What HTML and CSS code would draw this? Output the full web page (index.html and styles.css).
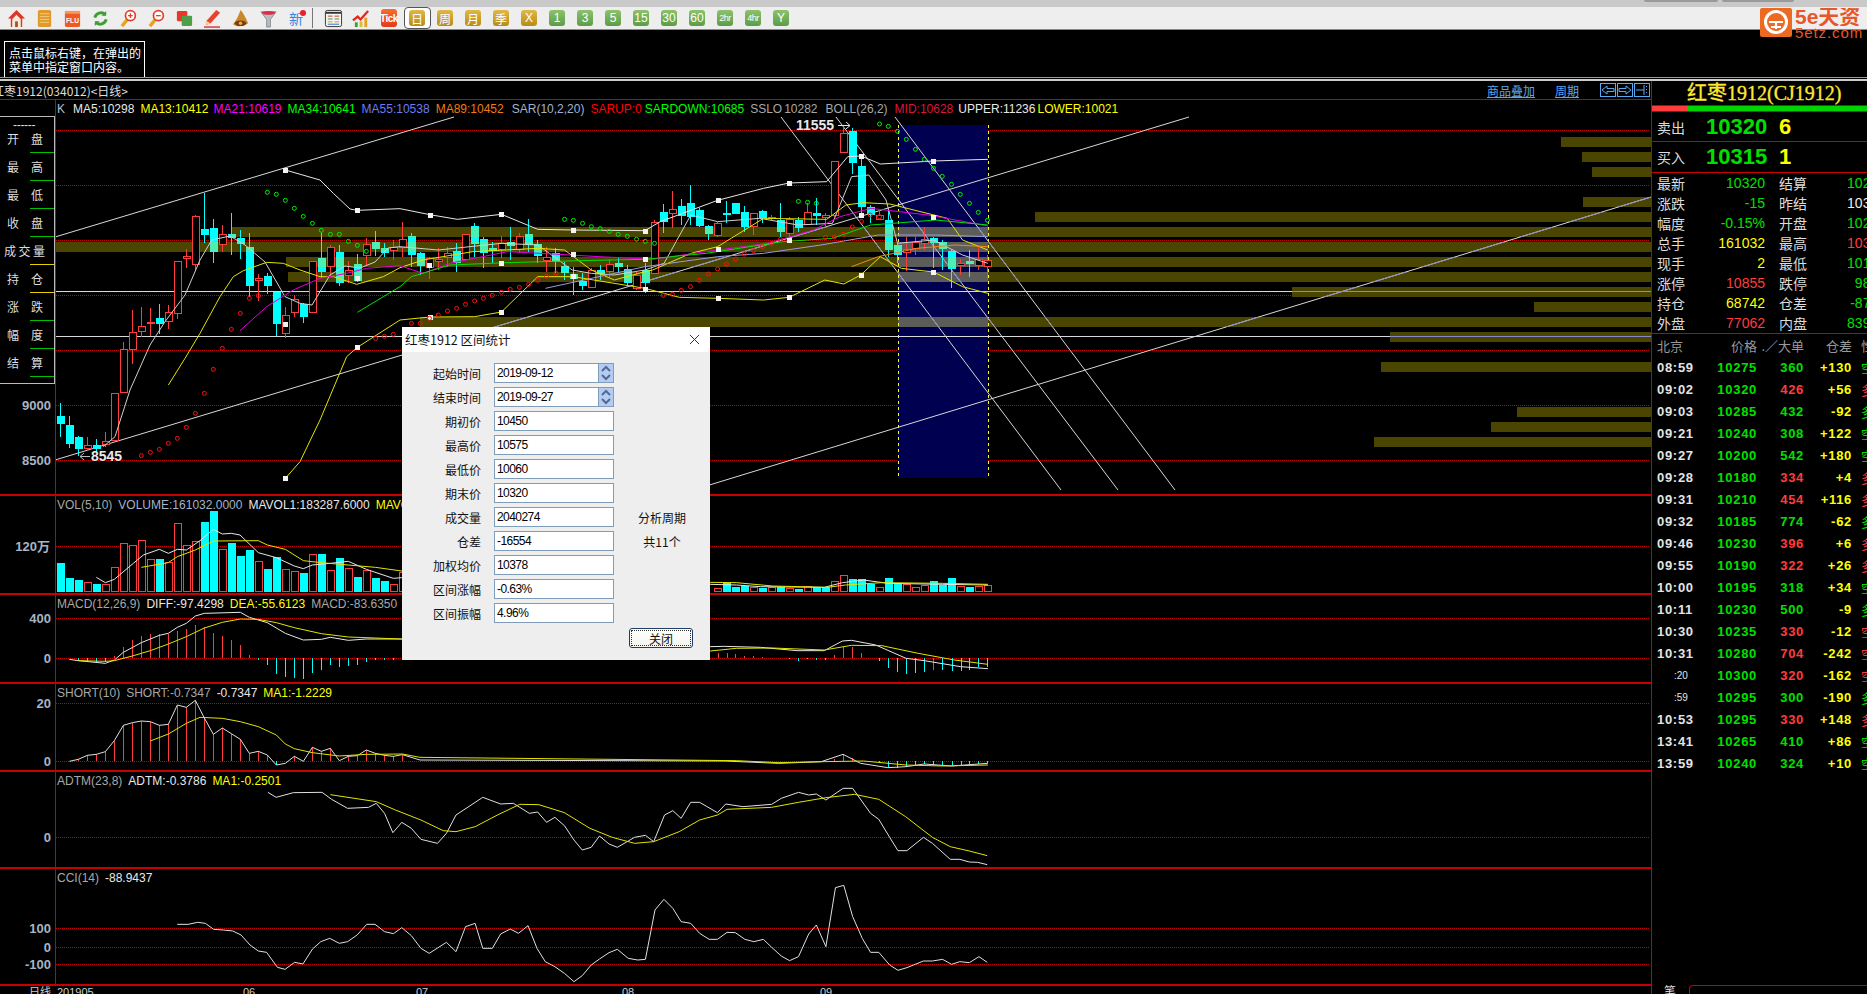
FILE: index.html
```html
<!DOCTYPE html>
<html lang="zh">
<head>
<meta charset="utf-8">
<title>红枣1912</title>
<link rel="stylesheet" href="styles.css">
</head>
<body>
<div class="strip">
  <span class="frag">系统 功能</span><span class="frag">报价 分析</span><span class="frag red">交易 委托</span><span class="frag">扩展 工具</span><span class="frag">帮助</span><span class="frag red far">风险提示 公告</span>
  <span class="stab"></span><span class="stab"></span>
</div>
<div class="toolbar">
  <span class="tool"><svg viewBox="0 0 20 20"><path d="M10 1L1 10h3v9h12v-9h3z" fill="#d9382a"/><path d="M5.500 10.500L10 6l4.500 4.500V19h-9z" fill="#f6ead8"/><path d="M8.500 13h3v6h-3z" fill="#a9502a"/></svg></span>
  <span class="tool"><svg viewBox="0 0 20 20"><rect x="3" y="1" width="14" height="18" rx="2" fill="#e09a2c"/><path d="M5 5h10M5 8h10M5 11h10M5 14h10" stroke="#f4cf7a"/></svg></span>
  <span class="tool"><svg viewBox="0 0 20 20"><rect x="2" y="2" width="16" height="17" rx="2" fill="#ee5a26"/><rect x="2" y="2" width="16" height="3" fill="#f59a5a"/><text x="10" y="15" class="ico-t">FLU</text></svg></span>
  <span class="tool"><svg viewBox="0 0 20 20" fill="none" stroke="#3f9e32" stroke-width="3"><path d="M4 9a6.500 6.500 0 0 1 11-3"/><path d="M16 11a6.500 6.500 0 0 1-11 3"/><path d="M16 2v5h-5z" fill="#3f9e32" stroke="none"/><path d="M4 18v-5h5z" fill="#3f9e32" stroke="none"/></svg></span>
  <span class="tool"><svg viewBox="0 0 20 20"><path d="M9 11L3 18" stroke="#eaa21c" stroke-width="3.500"/><circle cx="12" cy="7" r="5.200" fill="#fff" stroke="#e0402a" stroke-width="1.800"/><path d="M9.500 7h5M12 4.500v5" stroke="#e0402a" stroke-width="1.400"/></svg></span>
  <span class="tool"><svg viewBox="0 0 20 20"><path d="M9 11L3 18" stroke="#eaa21c" stroke-width="3.500"/><circle cx="12" cy="7" r="5.200" fill="#fff" stroke="#e0402a" stroke-width="1.800"/><path d="M9.500 7h5" stroke="#e0402a" stroke-width="1.400"/></svg></span>
  <span class="tool"><svg viewBox="0 0 20 20"><rect x="2" y="2" width="11" height="11" rx="1.500" fill="#e8382a"/><rect x="7" y="7" width="11" height="11" rx="1.500" fill="#4f9f4a"/></svg></span>
  <span class="tool"><svg viewBox="0 0 20 20"><path d="M14 1l4 3L8 15l-5 2 1-5z" fill="#e8432e"/><path d="M3 12l5 3-5 2z" fill="#f5c9a0"/><path d="M1 19h17" stroke="#d33" stroke-width="1.500"/></svg></span>
  <span class="tool"><svg viewBox="0 0 20 20"><path d="M10 1c3 3 6 9 8 14-5 4-12 4-16 1 3-3 6-9 8-15z" fill="#c9892a"/><ellipse cx="10" cy="15" rx="6" ry="3" fill="#7a3a12"/><circle cx="10" cy="15" r="1.800" fill="#e8b040"/></svg></span>
  <span class="tool"><svg viewBox="0 0 20 20"><path d="M2 3h16l-6 8v8h-4v-8z" fill="#b9bcc0" stroke="#7a7d80" stroke-width=".8"/><ellipse cx="10" cy="4" rx="7" ry="2" fill="#d8304a"/></svg></span>
  <span class="tool new">新<i></i></span>
  <span class="sep"></span>
  <span class="tool"><svg viewBox="0 0 20 20"><rect x="1.500" y="1.500" width="17" height="17" rx="2" fill="#f5f5f0" stroke="#333"/><path d="M2 4h16" stroke="#333" stroke-width="2"/><path d="M4 7.500h5M11 7.500h5" stroke="#c33"/><path d="M4 10.500h5M11 10.500h5" stroke="#393"/><path d="M4 13.500h5M11 13.500h5" stroke="#c93"/><path d="M4 16h12" stroke="#36c"/></svg></span>
  <span class="tool"><svg viewBox="0 0 20 20"><path d="M1 12l5-4 3 3 8-9" fill="none" stroke="#e0281e" stroke-width="2.400"/><rect x="3" y="14" width="3" height="5" fill="#3fa03a"/><rect x="8" y="13" width="3" height="6" fill="#d8c22a"/><rect x="13" y="9" width="3" height="10" fill="#e8a020"/></svg></span>
  <span class="tool tick">Tick</span>
  <span class="tool"><span class="chosen"><b class="pill gold">日</b></span></span>
  <span class="tool"><b class="pill gold">周</b></span>
  <span class="tool"><b class="pill gold">月</b></span>
  <span class="tool"><b class="pill gold">季</b></span>
  <span class="tool"><b class="pill gold">X</b></span>
  <span class="tool"><b class="pill green">1</b></span>
  <span class="tool"><b class="pill green">3</b></span>
  <span class="tool"><b class="pill green">5</b></span>
  <span class="tool"><b class="pill green">15</b></span>
  <span class="tool"><b class="pill green">30</b></span>
  <span class="tool"><b class="pill green">60</b></span>
  <span class="tool"><b class="pill green small">2hr</b></span>
  <span class="tool"><b class="pill green small">4hr</b></span>
  <span class="tool"><b class="pill green">Y</b></span>
  <div class="logo">
    <svg viewBox="0 0 32 29"><rect width="32" height="29" rx="2" fill="#ec6a22"/><circle cx="16" cy="14" r="10.500" fill="none" stroke="#fff" stroke-width="3"/><path d="M9 14h14M16 14v7M11 19h10" stroke="#fff" stroke-width="2.200"/></svg>
    <div class="logo-words"><span class="logo-big">5e天资</span><span class="logo-small">5etz.com</span></div>
  </div>
</div>
<div class="infobar">
  <div class="hint">点击鼠标右键，在弹出的<br>菜单中指定窗口内容。</div>
</div>
<div class="divider"></div>
<div class="workspace">
  <section class="chart">
    <svg id="plot" class="plot" viewBox="0 81 1652 913"></svg>
    <div class="chart-title">
      <span class="name">红枣1912(034012)&lt;日线&gt;</span>
      <a class="link first">商品叠加</a><a class="link">周期</a>
      <span class="arrows">
        <i class="arrow"><svg viewBox="0 0 14 12"><path d="M1 6l5-4v2.500h7v3H6V10z" fill="none" stroke="#5aa8f0"/></svg></i>
        <i class="arrow"><svg viewBox="0 0 14 12"><path d="M13 6L8 2v2.500H1v3h7V10z" fill="none" stroke="#5aa8f0"/></svg></i>
        <i class="arrow"><svg viewBox="0 0 14 12"><path d="M1 6h8M9 1v10M11.500 2v1M11.500 5v1M11.500 8v1" fill="none" stroke="#5aa8f0"/></svg></i>
      </span>
    </div>
    <div class="pane main">
      <div class="axis">
        <div class="scale">
          <div class="scale-head">------</div>
          <div class="s-row"><span>开</span><span>盘</span></div>
          <div class="s-row"><span>最</span><span>高</span></div>
          <div class="s-row"><span>最</span><span>低</span></div>
          <div class="s-row"><span>收</span><span>盘</span></div>
          <div class="s-row yel wide"><span>成</span><span>交</span><span>量</span></div>
          <div class="s-row yel"><span>持</span><span>仓</span></div>
          <div class="s-row"><span>涨</span><span>跌</span></div>
          <div class="s-row"><span>幅</span><span>度</span></div>
          <div class="s-row"><span>结</span><span>算</span></div>
        </div>
      </div>
      <div class="legend tight">
        <span class="lk">K</span><span class="l-w">MA5:10298</span><span class="l-y g6">MA13:10412</span><span class="l-m g5">MA21:10619</span><span class="l-g g6">MA34:10641</span><span class="l-b g6">MA55:10538</span><span class="l-o g6">MA89:10452</span><span class="l-s g8">SAR(10,2,20)</span><span class="l-r g6">SARUP:0</span><span class="l-g g3">SARDOWN:10685</span><span class="l-a g6">SSLO</span><span class="l-a g2">10282</span><span class="l-a g8">BOLL(26,2)</span><span class="l-c g7">MID:10628</span><span class="l-w g5">UPPER:11236</span><span class="l-y g2">LOWER:10021</span>
      </div>
    </div>
    <div class="pane vol">
      <div class="axis"></div>
      <div class="legend"><span class="l-a">VOL(5,10)</span><span class="l-s">VOLUME:161032.0000</span><span class="l-w">MAVOL1:183287.6000</span><span class="l-y">MAVOL2:196512.4000</span></div>
    </div>
    <div class="pane macd">
      <div class="axis"></div>
      <div class="legend"><span class="l-a">MACD(12,26,9)</span><span class="l-w">DIFF:-97.4298</span><span class="l-y">DEA:-55.6123</span><span class="l-a">MACD:-83.6350</span></div>
    </div>
    <div class="pane short">
      <div class="axis"></div>
      <div class="legend"><span class="l-a">SHORT(10)</span><span class="l-a">SHORT:-0.7347</span><span class="l-w">-0.7347</span><span class="l-y">MA1:-1.2229</span></div>
    </div>
    <div class="pane adtm">
      <div class="axis"></div>
      <div class="legend"><span class="l-a">ADTM(23,8)</span><span class="l-w">ADTM:-0.3786</span><span class="l-y">MA1:-0.2501</span></div>
    </div>
    <div class="pane cci">
      <div class="axis"></div>
      <div class="legend"><span class="l-a">CCI(14)</span><span class="l-w">-88.9437</span></div>
    </div>
    <div class="dialog">
      <div class="d-title"><span>红枣1912 区间统计</span><svg viewBox="0 0 12 12"><path d="M1 1l10 10M11 1L1 11" stroke="#222" stroke-width="1"/></svg></div>
      <div class="d-body">
        <div class="d-grid">
          <label>起始时间</label><div class="field spin"><span>2019-09-12</span><i class="spinner"><svg viewBox="0 0 14 16"><path d="M3 6l4-4 4 4M3 10l4 4 4-4" fill="none" stroke="#54698c" stroke-width="2"/></svg></i></div><span></span>
          <label>结束时间</label><div class="field spin"><span>2019-09-27</span><i class="spinner"><svg viewBox="0 0 14 16"><path d="M3 6l4-4 4 4M3 10l4 4 4-4" fill="none" stroke="#54698c" stroke-width="2"/></svg></i></div><span></span>
          <label>期初价</label><div class="field"><span>10450</span></div><span></span>
          <label>最高价</label><div class="field"><span>10575</span></div><span></span>
          <label>最低价</label><div class="field"><span>10060</span></div><span></span>
          <label>期末价</label><div class="field"><span>10320</span></div><span></span>
          <label>成交量</label><div class="field"><span>2040274</span></div><span class="d-note">分析周期</span>
          <label>仓差</label><div class="field"><span>-16554</span></div><span class="d-note">共11个</span>
          <label>加权均价</label><div class="field"><span>10378</span></div><span></span>
          <label>区间涨幅</label><div class="field"><span>-0.63%</span></div><span></span>
          <label>区间振幅</label><div class="field"><span>4.96%</span></div><span></span>
        </div>
        <div class="d-actions"><button class="d-btn"><span>关闭</span></button></div>
      </div>
    </div>
  </section>
  <aside class="quote">
    <div class="q-title">红枣1912(CJ1912)</div>
    <div class="q-bar"><i></i></div>
    <div class="book"><span>卖出</span><b class="up">10320</b><b class="vol-n">6</b></div>
    <div class="book"><span>买入</span><b class="up">10315</b><b class="vol-n">1</b></div>
    <div class="stats">
      <div class="st"><span>最新</span><em class="g">10320</em><span>结算</span><em class="g">10290</em></div>
      <div class="st"><span>涨跌</span><em class="g">-15</em><span>昨结</span><em class="w">10335</em></div>
      <div class="st"><span>幅度</span><em class="g">-0.15%</em><span>开盘</span><em class="g">10280</em></div>
      <div class="st"><span>总手</span><em class="y">161032</em><span>最高</span><em class="r">10355</em></div>
      <div class="st"><span>现手</span><em class="y">2</em><span>最低</span><em class="g">10170</em></div>
      <div class="st"><span>涨停</span><em class="r">10855</em><span>跌停</span><em class="g">9815</em></div>
      <div class="st"><span>持仓</span><em class="y">68742</em><span>仓差</span><em class="g">-8720</em></div>
      <div class="st"><span>外盘</span><em class="r">77062</em><span>内盘</span><em class="g">83970</em></div>
    </div>
    <div class="trades">
      <div class="tr head"><span>北京</span><span>价格</span><span>.／大单</span><span>仓差</span><span>性质</span></div>
      <div class="tr"><span class="t">08:59</span><span class="g">10275</span><span class="g">360</span><span class="y">+130</span><span class="g c">空开</span></div>
      <div class="tr"><span class="t">09:02</span><span class="g">10320</span><span class="r">426</span><span class="y">+56</span><span class="r c">多开</span></div>
      <div class="tr"><span class="t">09:03</span><span class="g">10285</span><span class="g">432</span><span class="y">-92</span><span class="g c">多平</span></div>
      <div class="tr"><span class="t">09:21</span><span class="g">10240</span><span class="g">308</span><span class="y">+122</span><span class="g c">空开</span></div>
      <div class="tr"><span class="t">09:27</span><span class="g">10200</span><span class="g">542</span><span class="y">+180</span><span class="g c">空开</span></div>
      <div class="tr"><span class="t">09:28</span><span class="g">10180</span><span class="r">334</span><span class="y">+4</span><span class="r c">多开</span></div>
      <div class="tr"><span class="t">09:31</span><span class="g">10210</span><span class="r">454</span><span class="y">+116</span><span class="r c">多开</span></div>
      <div class="tr"><span class="t">09:32</span><span class="g">10185</span><span class="g">774</span><span class="y">-62</span><span class="g c">多平</span></div>
      <div class="tr"><span class="t">09:46</span><span class="g">10230</span><span class="r">396</span><span class="y">+6</span><span class="r c">多开</span></div>
      <div class="tr"><span class="t">09:55</span><span class="g">10190</span><span class="r">322</span><span class="y">+26</span><span class="r c">多开</span></div>
      <div class="tr"><span class="t">10:00</span><span class="g">10195</span><span class="g">318</span><span class="y">+34</span><span class="g c">空开</span></div>
      <div class="tr"><span class="t">10:11</span><span class="g">10230</span><span class="g">500</span><span class="y">-9</span><span class="g c">多平</span></div>
      <div class="tr"><span class="t">10:30</span><span class="g">10235</span><span class="r">330</span><span class="y">-12</span><span class="r c">空平</span></div>
      <div class="tr"><span class="t">10:31</span><span class="g">10280</span><span class="r">704</span><span class="y">-242</span><span class="r c">空平</span></div>
      <div class="tr"><span class="t sub">:20</span><span class="g">10300</span><span class="r">320</span><span class="y">-162</span><span class="r c">空平</span></div>
      <div class="tr"><span class="t sub">:59</span><span class="g">10295</span><span class="g">300</span><span class="y">-190</span><span class="g c">多平</span></div>
      <div class="tr"><span class="t">10:53</span><span class="g">10295</span><span class="r">330</span><span class="y">+148</span><span class="r c">多开</span></div>
      <div class="tr"><span class="t">13:41</span><span class="g">10265</span><span class="g">410</span><span class="y">+86</span><span class="g c">空开</span></div>
      <div class="tr"><span class="t">13:59</span><span class="g">10240</span><span class="g">324</span><span class="y">+10</span><span class="g c">空开</span></div>
    </div>
    <div class="tabs"><span class="tab">笔</span><span class="tabline"></span></div>
  </aside>
</div>
<script src="chart.js"></script>
</body>
</html>
```
FILE: styles.css
```css
* { box-sizing: border-box; }
html, body { margin: 0; padding: 0; }
body {
  width: 1867px; height: 994px; overflow: hidden; background: #000; color: #ddd;
  font-family: "Noto Sans CJK SC", "Liberation Sans", sans-serif; font-size: 12px; position: relative;
}
.strip { height: 7px; background: #c9c9c9; display: flex; overflow: hidden; padding: 0 73px 0 20px; position: relative; }
.frag { margin: -15px 34px 0 0; height: 16px; line-height: 16px; font-size: 13px; color: #222; white-space: nowrap; }
.frag.red { color: #e02020; }
.frag.far { position: absolute; left: 997px; top: 0; margin: -15px 0 0; color: #f05020; letter-spacing: 6px; }
.stab { width: 74px; height: 2px; background: #9a9a9a; border-radius: 0 0 3px 3px; margin-right: 4px; flex: none; }
.stab:last-child { margin-right: 0; width: 72px; }
.frag + .stab { margin-left: auto; }
.toolbar {
  height: 23px; background: #eee; border-bottom: 1px solid #8a8a8a; display: flex; align-items: center;
  padding-left: 2px; position: relative;
}
.tool { width: 28px; height: 22px; display: flex; align-items: center; justify-content: center; flex: none; }
.tool svg { width: 19px; height: 19px; }
.ico-t { font: bold 7px "Liberation Sans", sans-serif; fill: #ffe; text-anchor: middle; }
.new { color: #3a86e0; font-size: 14px; position: relative; }
.new i { position: absolute; width: 6px; height: 6px; border-radius: 50%; background: #e8202a; top: 3px; right: 4px; }
.sep { width: 1px; height: 20px; background: #777; margin: 0 6px 0 2px; flex: none; }
.tick { font: bold 10px "Liberation Sans", sans-serif; color: #fff; }
.tick { background: linear-gradient(#f5702c, #e23a1c); width: 16px; height: 18px; margin: 0 6px; border-radius: 3px; letter-spacing: -.5px; }
.pill {
  width: 16px; height: 16px; border-radius: 3px; display: flex; align-items: center; justify-content: center;
  font: 400 12px "Liberation Sans", "Noto Sans CJK SC", sans-serif; color: #fff;
}
.pill.small { font-size: 9px; letter-spacing: -.5px; }
.gold { background: linear-gradient(#e0b84a, #b98b14); }
.green { background: linear-gradient(#8dc26c, #5c9c46); }
.chosen { width: 27px; height: 22px; border: 1px solid #555; border-radius: 4px; background: #fff; display: flex; align-items: center; justify-content: center; }
.logo { position: absolute; left: 1760px; top: 1px; display: flex; gap: 3px; z-index: 5; }
.logo svg { width: 32px; height: 29px; }
.logo-words { display: flex; flex-direction: column; gap: 1px; }
.logo-big { font: bold 21px/18px "Liberation Sans", "Noto Sans CJK SC", sans-serif; color: #e8562a; height: 18px; overflow: hidden; }
.logo-small { font: 15px/11px "Liberation Sans", sans-serif; color: #e8562a; letter-spacing: .9px; height: 11px; overflow: hidden; }
.infobar { height: 47px; padding: 11px 0 0 4px; }
.hint {
  width: 141px; height: 36px; border: 1px solid #fff; border-bottom: 0; color: #fff;
  padding: 4px 0 0 4px; font-size: 12px; line-height: 14px; white-space: nowrap;
}
.divider { height: 4px; border-top: 1px solid #999; border-bottom: 2px solid #ccc; }
.workspace { display: flex; height: 913px; }
.chart { width: 1652px; flex: none; border-right: 1px solid #c80000; position: relative; }
.plot { position: absolute; left: 0; top: 0; width: 1652px; height: 913px; z-index: 1; }
.plot text { font-family: "Liberation Sans", "Noto Sans CJK SC", sans-serif; }
.chart-title {
  height: 19px; border-bottom: 1px solid #c80000; display: flex; align-items: center; position: relative; z-index: 2; overflow: hidden;
}
.name { margin-left: -8px; color: #ddd; white-space: nowrap; font-size: 12px; width: 1495px; }
.link { color: #5aa8f0; text-decoration: underline; font-size: 12px; }
.link.first { margin-right: 20px; }
.arrows { display: flex; margin-left: 21px; gap: 1px; }
.arrow { width: 16px; height: 14px; border: 1px solid #5aa8f0; display: flex; }
.arrow svg { width: 14px; height: 12px; }
.pane { display: flex; border-bottom: 2px solid #c80000; }
.main { height: 396px; }
.vol { height: 99px; }
.macd { height: 89px; }
.short { height: 88px; }
.adtm { height: 97px; }
.cci { height: 117px; }
.axis { width: 56px; flex: none; border-right: 1px solid #c80000; position: relative; z-index: 2; }
.main .axis { padding-top: 16px; }
.legend {
  display: flex; gap: 6px; height: 18px; padding-left: 1px; position: relative; z-index: 2;
  font: 12px/18px "Liberation Sans", sans-serif; white-space: nowrap;
}
.legend.tight { gap: 0; }
.lk { color: #a9c0dc; margin-right: 8px; }
.g2 { margin-left: 2px; } .g3 { margin-left: 3px; } .g5 { margin-left: 5px; } .g6 { margin-left: 6px; }
.g7 { margin-left: 7px; } .g8 { margin-left: 8px; }
.l-w { color: #e8e8e8; } .l-y { color: #ff0; } .l-m { color: #f0f; } .l-g { color: #0f0; }
.l-b { color: #6b7cf0; } .l-o { color: #f07a14; } .l-s { color: #a0b4cc; } .l-r { color: #f00; }
.l-a { color: #a8a8a8; } .l-c { color: #dc143c; }
.scale { width: 55px; height: 268px; border: 1px solid #bbb; border-left: 0; background: #000; }
.scale-head { height: 8px; padding-left: 13px; font: 12px/16px "Liberation Sans", sans-serif; color: #ddd; letter-spacing: -.3px; }
.s-row {
  height: 28px; display: flex; justify-content: space-between; padding: 0 11px 0 7px; font-size: 12px; line-height: 28px; color: #ddd; position: relative;
}
.s-row::after { content: ""; position: absolute; right: 0; bottom: 0; width: 24px; height: 1px; background: #00c000; }
.s-row.yel::after { background: #e8d000; }
.s-row.wide { padding: 0 9px 0 4px; }
.dialog {
  position: absolute; left: 402px; top: 246px; width: 308px; height: 333px; z-index: 4; background: #eee; color: #111;
  font-size: 12px;
}
.d-title { height: 25px; background: #fff; display: flex; align-items: center; justify-content: space-between; padding: 0 10px 0 3px; font-size: 12.500px; }
.d-title svg { width: 11px; height: 11px; }
.d-body { padding-top: 11px; }
.d-grid { display: grid; grid-template-columns: 79px 120px 83px; column-gap: 13px; row-gap: 4px; grid-auto-rows: 20px; align-items: center; }
.d-grid label { text-align: right; }
.field {
  height: 20px; background: #fff; border: 1px solid #7f9db9; display: flex; align-items: center; justify-content: space-between;
  padding-left: 2px; font: 12px "Liberation Sans", sans-serif; letter-spacing: -.55px; color: #000;
}
.spinner { width: 15px; height: 18px; background: #b4ccf4; display: flex; border-left: 1px solid #7f9db9; }
.spinner svg { width: 14px; height: 16px; margin-top: 1px; }
.d-note { text-align: center; margin-left: -13px; }
.d-actions { display: flex; justify-content: flex-end; padding: 5px 17px 0 0; }
.d-btn {
  width: 64px; height: 20px; border: 1px solid #1e3e66; border-radius: 3px; background: linear-gradient(#fff, #f4f4ec); padding: 1px;
  font: 12px "Noto Sans CJK SC", sans-serif; color: #111;
}
.d-btn span { display: block; height: 100%; line-height: 15px; border: 1px dotted #333; }
.quote { width: 215px; flex: none; overflow: hidden; display: flex; flex-direction: column; height: 913px; }
.q-title {
  height: 24px; flex: none; padding-left: 35px; white-space: nowrap; color: #ffe930;
  font: 400 20px/24px "Liberation Serif", "Noto Sans CJK SC", serif; -webkit-text-stroke: .3px #ffe930;
}
.q-bar { height: 7px; flex: none; border-top: 1px solid #c80000; border-bottom: 1px solid #c80000; background: #00d400; }
.q-bar i { display: block; width: 35px; height: 100%; background: #ff3c3c; }
.book { height: 30px; flex: none; border-bottom: 1px solid #c80000; display: flex; align-items: center; padding-left: 5px; font-size: 14px; color: #ddd; }
.book + .book { height: 31px; }
.book span { width: 49px; }
.book b { font: bold 22px "Liberation Sans", sans-serif; }
.book .up { color: #00e000; width: 73px; }
.book .vol-n { color: #ff0; }
.stats { border-bottom: 1px solid #c80000; height: 161px; flex: none; }
.st { height: 20px; display: grid; grid-template-columns: 27px 81px 27px 94px; padding-left: 5px; font-size: 14px; line-height: 20px; color: #ddd; white-space: nowrap; }
.st span:nth-of-type(2) { margin-left: 14px; }
.st em { font: 14px/20px "Liberation Sans", sans-serif; text-align: right; }
.st em:last-child { margin-left: 14px; }
.g { color: #00e000; } .y { color: #ff0; } .r { color: #ff3c3c; } .w { color: #eee; }
.trades { padding-top: 1px; flex: none; }
.tr {
  height: 22px; display: grid; grid-template-columns: 43px 57px 47px 48px 30px; padding-left: 5px; align-items: center;
  font: bold 13px "Liberation Sans", sans-serif; letter-spacing: .7px; white-space: nowrap;
}
.tr span:nth-child(n+2) { text-align: right; }
.tr span:nth-child(5) { text-align: left; margin-left: 9px; font: 13px "Noto Sans CJK SC", sans-serif; }
.tr .t { color: #e4e4e4; }
.tr .t.sub { font-weight: 400; font-size: 10px; padding-left: 17px; letter-spacing: 0; }
.tr.head { height: 21px; color: #999; font: 13px "Noto Sans CJK SC", sans-serif; letter-spacing: 0; }
.tabs { margin-top: auto; height: 9px; flex: none; display: flex; }
.tab { width: 37px; padding-left: 12px; font-size: 12px; line-height: 12px; color: #ddd; }
.tabline { flex: 1; border-top: 1px solid #c80000; border-left: 1px solid #c80000; border-radius: 4px 0 0 0; }
```
FILE: chart.js
```js
(function () {
  var svg = document.getElementById('plot');
  var o = [];
  var RED = '#ff3c3c', CY = '#00ffff', YEL = '#e4e400';

  function z6(a) { var r = []; for (var i = 0; i < a.length; i += 2) r.push((a[i] / 3) + ',' + (100 + a[i + 1] / 3)); return r; }
  function z7(a) { var r = []; for (var i = 0; i < a.length; i += 2) r.push((400 + a[i] / 2.613) + ',' + (100 + a[i + 1] / 3)); return r; }
  function z9(a) { var r = []; for (var i = 0; i < a.length; i += 2) r.push((a[i] / 3) + ',' + (490 + a[i + 1] / 3)); return r; }
  function z11(a) { var r = []; for (var i = 0; i < a.length; i += 2) r.push((700 + a[i] / 1.65) + ',' + (490 + a[i + 1] / 3)); return r; }
  function z10(a) { var r = []; for (var i = 0; i < a.length; i += 2) r.push((a[i] / 1.568) + ',' + (760 + a[i + 1] / 3)); return r; }
  function pl(pts, c, w) { o.push('<polyline fill="none" stroke="' + c + '" stroke-width="' + (w || 1) + '" points="' + pts.join(' ') + '"/>'); }
  function ln(x1, y1, x2, y2, c, extra) { o.push('<line x1="' + x1 + '" y1="' + y1 + '" x2="' + x2 + '" y2="' + y2 + '" stroke="' + c + '" ' + (extra || '') + '/>'); }
  function rc(x, y, w, h, f, extra) { o.push('<rect x="' + x + '" y="' + y + '" width="' + w + '" height="' + h + '" fill="' + f + '" ' + (extra || '') + '/>'); }
  function tx(x, y, s, cls, anchor) { o.push('<text x="' + x + '" y="' + y + '" class="' + cls + '" text-anchor="' + (anchor || 'end') + '">' + s + '</text>'); }

  o.push('<style>.ax{font-size:13px;font-weight:700;fill:#a9b4c4}.lab{font-size:14px;font-weight:700;fill:#e8e8e8}.ft{font-size:11px;fill:#ccc}.cr{shape-rendering:crispEdges}</style>');

  /* dotted grid */
  [130, 185, 240, 295, 350, 405, 460, 546, 618, 658, 703, 761, 837, 928, 947, 964].forEach(function (y) {
    ln(56, y + .5, 1650, y + .5, '#c80000', 'stroke-dasharray="1 1" class="cr"');
  });

  /* volume profile */
  var bars = [[137, 1561], [152, 1582], [167, 1592], [197, 1583], [212, 1035], [227, 232], [242, 56], [257, 286], [272, 288], [287, 1292], [302, 1534], [317, 420], [332, 1390], [362, 1381], [407, 1517], [422, 1491], [437, 1374]];
  var clip = '';
  bars.forEach(function (b) {
    rc(b[1], b[0], 1651 - b[1], 10, '#4a4500', 'class="cr"');
    clip += '<rect x="' + b[1] + '" y="' + b[0] + '" width="' + (1651 - b[1]) + '" height="10"/>';
  });
  o.push('<defs><clipPath id="bars">' + clip + '</clipPath></defs>');

  /* selected interval */
  rc(898, 125, 90, 353, '#000050', 'class="cr"');
  bars.forEach(function (b) {
    if (b[1] < 988 && b[0] > 125 && b[0] < 478) { var l = Math.max(b[1], 898); rc(l, b[0], 988 - l, 10, '#5c5c58', 'class="cr"'); }
  });
  ln(898.5, 125, 898.5, 478, '#ff0', 'stroke-dasharray="3 3" class="cr"');
  ln(988.5, 125, 988.5, 478, '#ff0', 'stroke-dasharray="3 3" class="cr"');

  /* drawing tools */
  var trend = [[56, 291.500, 1651, 291.500], [56, 336.500, 1651, 336.500], [55, 237, 454, 117], [55, 460, 1189, 117], [680, 494, 1651, 197], [781, 117, 1061, 490], [836, 117, 1118, 490], [895, 117, 1175, 490]];
  trend.forEach(function (t) { ln(t[0], t[1], t[2], t[3], '#d8d8d8'); });
  o.push('<g clip-path="url(#bars)">');
  trend.forEach(function (t) { ln(t[0], t[1], t[2], t[3], '#8a8ac8'); });
  o.push('</g>');

  /* candles */
  var c = [[0,948,968,910,1010],[0,975,1028,948,1043],[0,1012,1044,1008,1068],[1,1036,1044,1010,1052],[0,1036,1044,1018,1055],[1,1024,1033,995,1040],[1,878,1020,878,1020],[1,748,875,725,875],[1,697,748,630,792],[1,679,692,620,712],[1,665,670,625,708],[0,654,668,612,702],[1,637,662,615,687],[1,484,640,484,656],[1,468,475,447,503],[1,349,493,345,512],[0,387,401,278,428],[0,384,452,357,488],[1,403,433,375,455],[0,403,412,340,465],[0,414,428,390,477],[0,441,554,400,590],[1,535,540,523,603],[0,528,554,518,582],[0,575,668,575,708],[1,645,700,620,715],[1,598,635,585,650],[0,612,647,610,670],[1,484,635,484,635],[0,473,513,400,535],[1,441,499,435,530],[0,455,545,435,558],[1,510,525,483,550],[0,492,540,462,545],[1,431,466,415,495],[0,426,443,393,467],[0,444,456,430,470],[1,440,450,420,480],
  [1,418,442,365,470],[0,408,463,400,500],[0,460,495,455,525],[1,475,500,470,538],[1,478,484,445,510],[1,460,470,440,500],[0,453,485,430,515],[1,402,478,402,478],[0,377,428,370,470],[0,418,455,410,505],[0,445,450,425,490],[1,430,446,408,475],[0,427,435,380,480],[1,408,448,400,460],[0,402,431,358,455],[0,432,465,420,490],[1,472,480,440,515],[0,460,483,445,520],[0,498,515,485,540],[0,522,535,500,585],[0,543,555,520,570],[1,510,560,505,565],[0,510,520,495,540],[1,492,512,478,530],[0,488,498,470,520],[0,508,546,495,555],[1,525,565,515,570],[0,510,545,490,580],[1,367,520,360,520],[0,336,362,312,400],[1,327,338,272,385],[0,318,345,298,375],[0,310,348,255,375],[0,330,375,325,380],[0,378,400,375,420],[1,370,405,365,410],[0,338,343,303,370],[0,310,340,310,340],[0,337,378,318,395],[1,340,378,340,405],[0,334,350,330,368],[1,350,352,345,360],[0,360,393,308,410],[1,358,400,350,410],[0,360,382,350,395],[1,335,372,310,375],[0,338,346,295,375],[1,345,350,340,380],[1,183,345,183,350],[1,100,157,80,160],[0,93,185,85,222],[0,198,318,170,345],[0,322,342,315,370],[1,345,358,330,360],[0,360,447,330,470],[0,435,463,430,490],[1,448,456,410,512],[1,425,445,410,465],[1,418,430,380,450],[0,415,425,410,505],[0,425,445,420,510],[0,453,503,450,565],[1,490,495,478,525],[0,483,490,450,530],[1,476,495,440,510],[1,481,497,465,540]];
  var Y = function (v) { return Math.round(100 + v / 3); };
  var mint = '';
  c.forEach(function (k, i) {
    var x = 60 + 9 * i, col = k[0] ? RED : CY, t = Y(k[1]), b = Math.max(Y(k[2]), t + 1);
    ln(x + .5, Y(k[3]), x + .5, t, col, 'class="cr"');
    ln(x + .5, b, x + .5, Y(k[4]), col, 'class="cr"');
    if (k[0]) {
      o.push('<rect x="' + (x - 3) + '.5" y="' + t + '.5" width="7" height="' + (b - t) + '" fill="#000" stroke="' + RED + '" class="cr"/>');
    } else {
      rc(x - 3, t, 8, b - t + 1, CY, 'class="cr"');
      mint += '<rect x="' + (x - 3) + '" y="' + t + '" width="8" height="' + (b - t + 1) + '" fill="#4cf0b4" class="cr"/>';
    }
  });
  o.push('<g clip-path="url(#bars)">' + mint + '</g>');

  /* moving averages */
  pl(z6([310,1040,345,1010,390,870,450,735,495,665,555,585,600,480,635,420,690,408,735,435,795,486,855,590,900,610,936,615,990,525,1035,498,1080,504,1125,486,1164,444,1200,440]).concat(z7([100,450,265,430,360,435,450,510,500,520,560,525,640,510,690,490,760,345,830,365,940,355,1040,375,1130,370,1180,230,1225,225,1270,300,1300,430,1394,420,1470,465,1536,490])), '#d0d0d0');
  pl(z6([505,855,555,775,600,700,660,590,700,530,730,512,800,487,850,490,900,510,960,530,1000,530,1070,553,1150,530,1200,503]).concat(z7([60,480,190,455,360,445,430,450,500,510,560,540,640,515,660,510,760,460,830,440,950,355,1115,358,1165,315,1210,308,1280,312,1430,355,1470,420,1536,450])), YEL);
  pl(z6([720,692,800,620,880,570,960,535,1040,520,1100,505,1200,497]).concat(z7([60,520,130,490,280,455,400,462,520,470,660,478,800,455,960,430,1080,390,1150,350,1230,325,1380,345,1536,378])), '#e000d8');
  pl(z6([1072,637,1200,560]).concat(z7([30,530,130,495,280,488,470,482,640,478,800,460,1000,425,1130,415,1230,375,1400,360,1536,375])), '#00e000');
  pl(z7([380,565,640,500,830,470,950,460,1100,435,1250,405,1400,405,1536,410]), '#9a9ae0');
  pl(z7([1180,500,1250,470,1350,445,1450,435,1536,440]), '#f08a14');
  var up = z6([856,210,960,240,1000,280,1050,327,1072,331,1200,326]).concat(z7([78,344,150,358,265,343,360,388,453,390,640,392,680,365,830,301,950,265,1017,249,1115,245,1170,170,1205,168,1255,192,1394,183,1536,178]));
  pl(up, '#e6e6e6');
  var lo = z6([856,1135,900,1085,960,960,1040,770,1072,742,1200,660]).concat(z7([78,651,195,650,265,636,360,530,453,530,640,565,730,592,830,595,950,600,1017,592,1110,540,1160,552,1205,524,1255,470,1310,505,1394,516,1470,560,1536,580]));
  pl(lo, YEL);

  /* node markers */
  z6([856,210,1072,331,856,672,856,1135,1072,742,1072,535]).concat(z7([78,344,265,343,453,390,640,392,830,301,1017,249,1205,168,1394,183,78,651,265,636,453,462,640,567,830,595,1017,592,1205,524,1394,516,265,490,77,495,640,478,830,448,1017,420,1205,345,1394,350,453,528])).forEach(function (p) {
    var s = p.split(',');
    rc(Math.round(+s[0]) - 2, Math.round(+s[1]) - 2, 5, 5, '#f4f4f4', 'class="cr"');
  });

  /* SAR */
  function dots(pts, col) {
    pts.forEach(function (p) { var s = p.split(','); o.push('<circle cx="' + s[0] + '" cy="' + s[1] + '" r="2" fill="none" stroke="' + col + '"/>'); });
  }
  dots(z6([424,1067,451,1057,478,1048,505,1030,532,1015,559,982,586,940,613,880,640,808,667,745,694,688,721,640,748,595,775,587,1127,715,1153,709,1180,703]).concat(z7([30,670,53,670,77,655,100,645,124,633,148,625,171,613,195,603,218,595,241,586,265,577,288,568,312,562,336,553,360,541,383,529,407,519,688,586,712,583,735,571,759,560,782,541,806,522,830,507,853,492,877,477,900,462,924,452,947,440,971,431,994,418,1112,412,1135,411,1159,403,1182,381,1206,364,1229,345,1253,350])), '#ff1010');
  dots(z6([802,277,829,283,856,301,883,325,910,349,937,370,964,391,991,403,1018,403,1045,424,1072,436,1099,454]).concat(z7([430,358,453,361,477,370,500,380,523,386,547,394,570,403,594,409,618,418,641,424,665,430,1041,304,1065,307,1088,310,1253,72,1276,79,1300,94,1323,118,1347,148,1370,178,1394,205,1417,229,1441,253,1464,283,1488,310,1511,337,1535,361])), '#00f000');

  tx(51, 410, '9000', 'ax');
  tx(51, 465, '8500', 'ax');
  tx(796, 130, '11555', 'lab', 'start');
  ln(838, 125.500, 850, 125.500, '#e8e8e8');
  o.push('<path d="M846 122l4 3.500-4 3.500" fill="none" stroke="#e8e8e8"/>');
  tx(91, 461, '8545', 'lab', 'start');
  ln(80, 456.500, 90, 456.500, '#bbb');
  o.push('<path d="M84 453l-4 3.500 4 3.500" fill="none" stroke="#bbb"/>');

  /* VOL */
  tx(50, 551, '120万', 'ax');
  var v1 = [[0,28],[0,13],[0,11],[1,9],[0,7],[1,7],[1,24],[1,48],[1,46],[1,51],[1,32],[0,32],[1,29],[1,68],[1,46],[1,50],[0,69],[0,80],[1,42],[0,48],[0,35],[0,41],[1,30],[0,22],[0,34],[1,22],[1,20],[0,18],[1,37],[0,37],[1,21],[0,33],[1,23],[0,14],[1,21],[0,13],[0,10],[1,7],[1,19]];
  function volBar(x, k) {
    if (k[0]) o.push('<rect x="' + (x - 3) + '.5" y="' + (591 - k[1]) + '.5" width="7" height="' + k[1] + '" fill="#000" stroke="' + RED + '" class="cr"/>');
    else rc(x - 3, 591 - k[1], 8, k[1] + 1, CY, 'class="cr"');
  }
  v1.forEach(function (k, i) { volBar(60 + 9 * i, k); });
  var v2 = [[1,3],[0,8],[0,4],[0,5],[1,4],[0,3],[1,4],[0,4],[1,3],[0,2],[1,5],[0,4],[0,4],[1,10],[1,16],[0,12],[0,12],[0,7],[1,4],[0,13],[0,8],[1,7],[1,4],[1,6],[0,10],[0,6],[0,13],[1,5],[0,4],[1,5],[1,6]];
  v2.forEach(function (k, i) { volBar(717 + 9 * i, k); });
  pl(z9([289,262,316,278,343,268,400,220,430,195,478,178,505,190,532,178,559,180,600,152,640,118,667,132,694,130,720,135,775,188,829,203,883,228,910,236,937,225,991,220,1045,214,1099,238,1180,265,1205,263]).concat(z11([17,283,60,285,100,290,205,292,235,278,270,270,310,280,400,283,475,285])), '#e8e8e8');
  pl(z9([424,232,505,218,532,200,586,180,640,153,775,152,802,165,856,178,910,212,964,218,1045,225,1126,232,1205,243]).concat(z11([17,277,60,278,120,288,210,292,240,285,300,278,400,280,475,283])), YEL);

  /* MACD */
  tx(51, 623, '400', 'ax');
  tx(51, 663, '0', 'ax');
  var mb = 658;
  [[235,514],[262,514],[289,516],[316,516],[775,510],[802,525],[829,552],[856,561],[883,565],[910,567],[937,550],[964,541],[991,525],[1018,531],[1045,528],[1072,525],[1099,516],[1126,510],[1153,510],[1180,510]].forEach(function (h) {
    ln(Math.round(h[0] / 3) + .5, mb, Math.round(h[0] / 3) + .5, 490 + h[1] / 3, CY, 'class="cr"');
  });
  [[343,498],[370,470],[397,450],[424,437],[451,432],[478,432],[505,432],[532,423],[559,417],[586,405],[613,411],[640,429],[667,438],[694,450],[721,465],[748,495]].forEach(function (h) {
    ln(Math.round(h[0] / 3) + .5, mb, Math.round(h[0] / 3) + .5, 490 + h[1] / 3, RED, 'class="cr"');
  });
  [[29,489,1],[44,490,1],[58,493,1],[73,499,1],[88,498,1],[103,502,1],[132,504,1],[147,508,0],[162,512,0],[177,508,0],[192,510,0],[207,510,0],[221,495,1],[236,472,1],[251,470,1],[266,489,1],[296,512,0],[310,533,0],[325,545,0],[340,551,0],[355,549,0],[370,545,0],[385,540,1],[400,540,0],[415,543,0],[430,542,0],[444,540,0],[459,530,0],[474,530,0]].forEach(function (h) {
    var x = Math.round(700 + h[0] / 1.65) + .5;
    ln(x, mb, x, 490 + h[1] / 3, h[2] ? RED : CY, 'class="cr"');
  });
  pl(z9([208,508,235,512,316,520,343,510,370,487,424,458,478,436,505,430,532,412,559,400,586,378,613,370,721,367,748,382,802,398,856,430,910,450,964,448,991,442,1045,451,1099,447,1205,447]).concat(z11([17,470,40,469,100,472,160,482,205,482,235,453,250,451,290,465,340,505,370,512,430,530,475,536])), '#e8e8e8');
  pl(z9([235,512,316,514,343,512,397,498,451,482,505,462,559,440,613,414,667,397,721,387,775,388,829,398,883,413,964,431,1045,441,1126,444,1205,447]).concat(z11([17,483,60,475,120,474,205,480,250,466,300,467,360,490,420,510,475,523])), YEL);

  /* SHORT */
  tx(51, 708, '20', 'ax');
  tx(51, 766, '0', 'ax');
  var sb = 761;
  [[235,808],[262,796],[289,793],[316,785],[343,752],[370,706],[397,698],[424,693],[451,695],[478,706],[505,703],[532,645],[559,652],[586,631],[613,684],[640,733],[667,714],[694,731],[721,748],[748,790],[775,784],[802,795],[883,799],[937,772],[964,784],[991,775],[1018,812],[1045,799],[1072,797],[1099,780],[1126,790],[1153,796],[1180,799],[1207,794]].forEach(function (h) {
    ln(Math.round(h[0] / 3) + .5, sb, Math.round(h[0] / 3) + .5, 490 + h[1] / 3, RED, 'class="cr"');
  });
  ln(276.500, sb, 276.500, 765, CY, 'class="cr"');
  [[221,808,1],[236,793,1],[251,803,1],[296,820,0],[310,830,0],[325,833,0],[340,830,0],[355,825,0],[370,822,0],[385,825,0],[400,826,0],[415,828,0],[430,825,0],[444,822,0],[459,822,0],[474,820,0]].forEach(function (h) {
    var x = Math.round(700 + h[0] / 1.65) + .5;
    ln(x, sb, x, 490 + h[1] / 3, h[2] ? RED : CY, 'class="cr"');
  });
  pl(z9([208,814,235,808,262,796,289,793,316,785,343,752,370,706,397,698,424,693,451,695,478,706,505,703,532,645,559,652,586,631,613,684,640,733,667,714,694,731,721,748,748,790,775,784,802,795,829,825,856,820,883,799,910,814,937,772,964,784,991,775,1018,812,1045,799,1072,797,1099,780,1126,790,1153,796,1180,799,1207,794,1260,810]).concat(z11([40,813,130,820,200,815,236,793,265,820,310,833,340,830,370,822,415,828,475,820])), '#e0e0e0');
  pl(z9([451,753,505,732,559,700,600,682,667,685,721,695,775,710,829,735,856,762,883,776,937,788,1018,798,1099,793,1207,792,1260,802]).concat(z11([60,812,130,818,205,815,270,813,340,825,400,828,475,825])), YEL);

  /* ADTM */
  tx(51, 842, '0', 'ax');
  pl(z10([420,97,433,112,460,98,505,97,520,118,545,145,578,142,590,130,603,160,616,218,630,187,645,205,660,238,686,250,700,220,715,165,757,112,785,132,805,130,830,160,843,156,857,187,870,172,885,197,900,240,913,270,927,262,940,228,955,252,968,262,995,232,1012,226,1025,245,1042,165,1055,152,1068,175,1083,127,1097,127,1125,158,1138,132,1165,140,1210,133,1225,115,1252,97,1268,105,1280,102,1295,120,1322,85,1337,85,1365,160,1378,178,1395,232,1408,272,1422,272,1448,232,1462,250,1490,298,1505,298,1520,306,1533,307,1548,314]), '#e0e0e0');
  pl(z10([518,104,590,125,620,150,660,180,695,212,715,215,745,200,780,165,815,133,845,134,885,158,925,205,960,232,995,250,1025,245,1065,215,1097,180,1125,165,1140,148,1210,142,1252,127,1295,113,1340,103,1378,118,1420,170,1462,232,1490,260,1520,273,1548,287]), YEL);

  /* CCI */
  tx(51, 933, '100', 'ax');
  tx(51, 952, '0', 'ax');
  tx(51, 969, '-100', 'ax');
  pl(z10([278,493,295,493,310,487,322,490,335,508,350,510,365,513,378,525,392,555,405,573,418,577,435,622,447,628,462,607,475,612,490,567,503,545,517,535,532,550,545,545,560,525,575,493,588,493,603,515,617,521,630,503,645,527,660,565,673,580,700,547,715,575,730,500,745,490,757,565,772,565,785,522,800,507,813,520,828,497,842,565,855,605,870,620,885,640,900,665,913,647,927,615,940,597,955,578,968,568,985,595,1000,600,1012,598,1027,450,1041,418,1055,445,1068,485,1083,490,1097,520,1112,538,1125,538,1140,517,1153,518,1168,538,1182,545,1197,538,1210,562,1225,588,1238,602,1252,590,1268,522,1280,495,1295,560,1310,383,1323,376,1337,470,1352,535,1365,577,1378,577,1395,615,1408,631,1422,623,1448,603,1462,603,1478,598,1492,613,1505,605,1520,608,1535,590,1548,607]), '#e0e0e0');

  /* time axis */
  tx(29, 996, '日线', 'ft', 'start');
  tx(57, 996, '201905', 'ft', 'start');
  tx(243, 996, '06', 'ft', 'start');
  tx(416, 996, '07', 'ft', 'start');
  tx(622, 996, '08', 'ft', 'start');
  tx(820, 996, '09', 'ft', 'start');

  svg.innerHTML = o.join('');
})();
```
